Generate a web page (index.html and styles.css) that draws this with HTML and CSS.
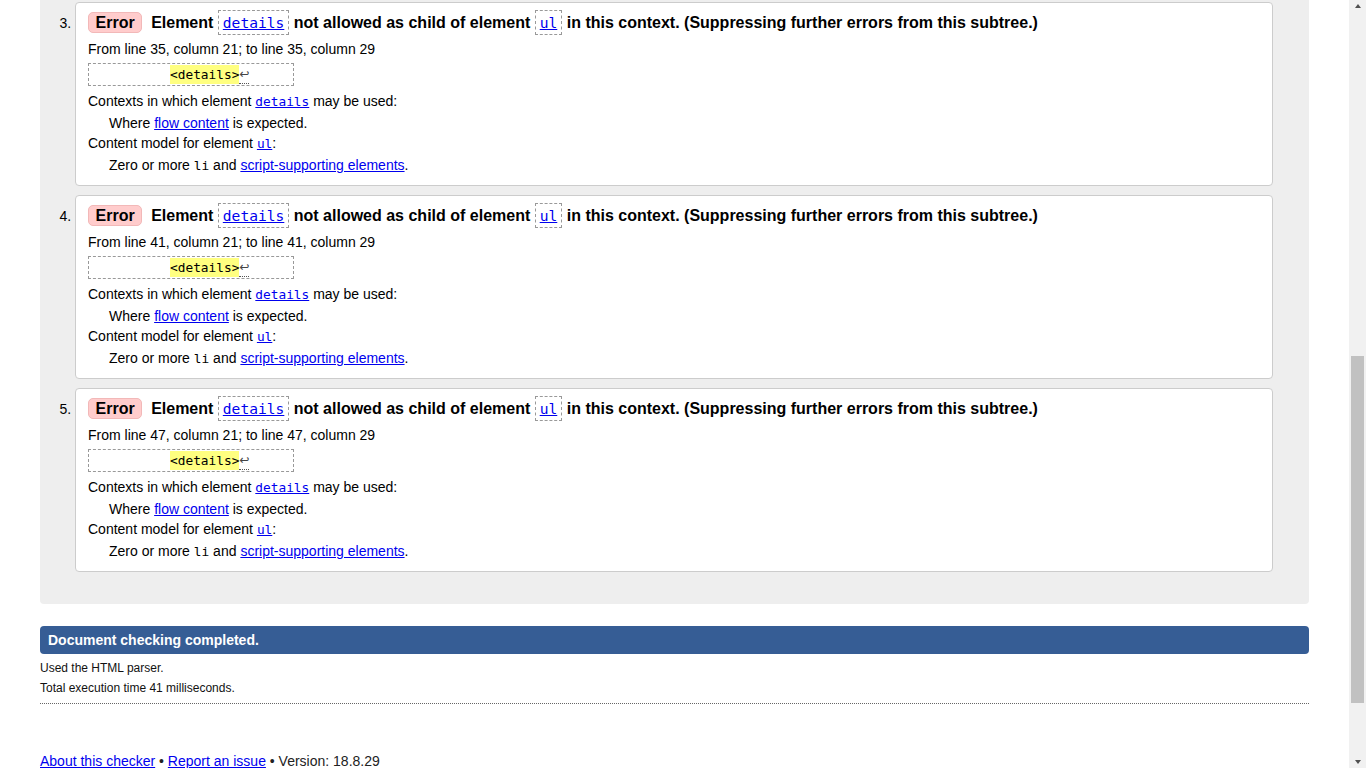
FILE: index.html
```html
<!DOCTYPE html>
<html lang="en">
<head>
<meta charset="utf-8">
<title>Nu Html Checker</title>
<link rel="stylesheet" href="styles.css">
</head>
<body>
<div class="viewport">
  <div class="page">
    <div class="results">
      <ol start="3">
        <li class="msg">
          <p class="title"><span class="badge">Error</span>Element <code class="tc"><a href="#">details</a></code> not allowed as child of element <code class="tc"><a href="#">ul</a></code> in this context. (Suppressing further errors from this subtree.)</p>
          <p class="location">From line 35, column 21; to line 35, column 29</p>
          <p class="extract"><code>          <b>&lt;details&gt;</b><span class="lf">↩</span></code></p>
          <dl>
            <dt>Contexts in which element <a href="#"><code>details</code></a> may be used:</dt>
            <dd>Where <a href="#">flow content</a> is expected.</dd>
            <dt>Content model for element <a href="#"><code>ul</code></a>:</dt>
            <dd>Zero or more <code>li</code> and <a href="#">script-supporting elements</a>.</dd>
          </dl>
        </li>
        <li class="msg">
          <p class="title"><span class="badge">Error</span>Element <code class="tc"><a href="#">details</a></code> not allowed as child of element <code class="tc"><a href="#">ul</a></code> in this context. (Suppressing further errors from this subtree.)</p>
          <p class="location">From line 41, column 21; to line 41, column 29</p>
          <p class="extract"><code>          <b>&lt;details&gt;</b><span class="lf">↩</span></code></p>
          <dl>
            <dt>Contexts in which element <a href="#"><code>details</code></a> may be used:</dt>
            <dd>Where <a href="#">flow content</a> is expected.</dd>
            <dt>Content model for element <a href="#"><code>ul</code></a>:</dt>
            <dd>Zero or more <code>li</code> and <a href="#">script-supporting elements</a>.</dd>
          </dl>
        </li>
        <li class="msg">
          <p class="title"><span class="badge">Error</span>Element <code class="tc"><a href="#">details</a></code> not allowed as child of element <code class="tc"><a href="#">ul</a></code> in this context. (Suppressing further errors from this subtree.)</p>
          <p class="location">From line 47, column 21; to line 47, column 29</p>
          <p class="extract"><code>          <b>&lt;details&gt;</b><span class="lf">↩</span></code></p>
          <dl>
            <dt>Contexts in which element <a href="#"><code>details</code></a> may be used:</dt>
            <dd>Where <a href="#">flow content</a> is expected.</dd>
            <dt>Content model for element <a href="#"><code>ul</code></a>:</dt>
            <dd>Zero or more <code>li</code> and <a href="#">script-supporting elements</a>.</dd>
          </dl>
        </li>
      </ol>
    </div>
    <p class="status">Document checking completed.</p>
    <div class="details">
      <p>Used the HTML parser.</p>
      <p>Total execution time 41 milliseconds.</p>
    </div>
    <p class="footer"><a href="#">About this checker</a> • <a href="#">Report an issue</a> • Version: 18.8.29</p>
  </div>
  <div class="scrollbar">
    <div class="sb-btn"><span class="arrow-up"></span></div>
    <div class="sb-track"><div class="sb-thumb"></div></div>
    <div class="sb-btn"><span class="arrow-down"></span></div>
  </div>
</div>
</body>
</html>
```
FILE: styles.css
```css
html, body {
  margin: 0;
  height: 768px;
  overflow: hidden;
}
body {
  font-family: "Liberation Sans", Arial, sans-serif;
  color: #000;
  background: #fff;
}
a {
  color: #0000ee;
}
code {
  font-family: "DejaVu Sans Mono", monospace;
  font-size: 12.8px;
  line-height: 12px;
}
.viewport {
  display: flex;
  height: 768px;
}
.page {
  flex: 1;
  min-width: 0;
  padding: 0 40px;
}
.results {
  background: #eee;
  border-radius: 0 0 4px 4px;
  padding: 2px 36px 32px 35px;
}
.results ol {
  margin: 0;
  padding: 0;
}
.msg {
  background: #fff;
  border: 1px solid #ccc;
  border-radius: 4px;
  padding: 7px 12px 10px 12px;
  font-size: 14px;
  line-height: 20px;
  margin-bottom: 9px;
}
.msg:last-child {
  margin-bottom: 0;
}
.msg::marker {
  font-size: 14px;
}
.msg p {
  margin: 0;
}
.msg .title {
  font-size: 16px;
  font-weight: bold;
  line-height: 25px;
  height: 25px;
  white-space: nowrap;
}
.badge {
  display: inline-block;
  vertical-align: top;
  margin-top: 2px;
  margin-right: 9px;
  padding: 0 6.5px;
  line-height: 19px;
  background: #ffcccc;
  border: 1px solid #f2b8b8;
  border-radius: 5px;
}
.tc {
  display: inline-block;
  vertical-align: top;
  font-size: 14.6px;
  font-weight: normal;
  line-height: 23px;
  padding: 0 4px;
  border: 1px dashed #999;
}
.msg .location {
  margin-top: 4px;
}
.msg .extract {
  margin-top: 4px;
  width: 206px;
  box-sizing: border-box;
  height: 23px;
  border: 1px dashed #999;
  padding: 1px 0 1px 4px;
  white-space: pre;
  line-height: 19px;
}
.extract code {
  line-height: 19px;
}
.extract b {
  display: inline-block;
  font-weight: normal;
  background: #ffff80;
  line-height: 19px;
  vertical-align: top;
}
.extract .lf {
  display: inline-block;
  vertical-align: top;
  color: #444;
  font-family: "DejaVu Sans", sans-serif;
  font-size: 12px;
  line-height: 18px;
  border-bottom: 1px dotted #555;
}
.msg dl {
  margin: 5px 0 0 0;
}
.msg dt {
  margin: 0;
}
.msg dd {
  margin: 2px 0 0 21px;
}
.status {
  margin: 22px 0 0 0;
  height: 28px;
  line-height: 28px;
  padding-left: 8px;
  background: #365d95;
  color: #fff;
  font-weight: bold;
  font-size: 14px;
  border-radius: 4px;
}
.details {
  margin-top: 4px;
  padding-bottom: 5px;
  border-bottom: 1px dotted #666;
  font-size: 12px;
  line-height: 20px;
  color: #111;
}
.details p {
  margin: 0;
}
.footer {
  margin: 47px 0 0 0;
  font-size: 14px;
  line-height: 20px;
  color: #222;
}
.scrollbar {
  width: 17px;
  background: #f1f1f1;
  display: flex;
  flex-direction: column;
}
.sb-btn {
  height: 17px;
  display: flex;
  align-items: center;
  justify-content: center;
}
.arrow-up {
  width: 0;
  height: 0;
  border-left: 3.5px solid transparent;
  border-right: 3.5px solid transparent;
  border-bottom: 4px solid #505050;
  margin-top: -5px;
}
.arrow-down {
  width: 0;
  height: 0;
  border-left: 3.5px solid transparent;
  border-right: 3.5px solid transparent;
  border-top: 4px solid #505050;
  margin-top: 5px;
}
.sb-track {
  flex: 1;
}
.sb-thumb {
  margin: 339px 2px 0 2px;
  height: 347px;
  background: #c1c1c1;
}
```
